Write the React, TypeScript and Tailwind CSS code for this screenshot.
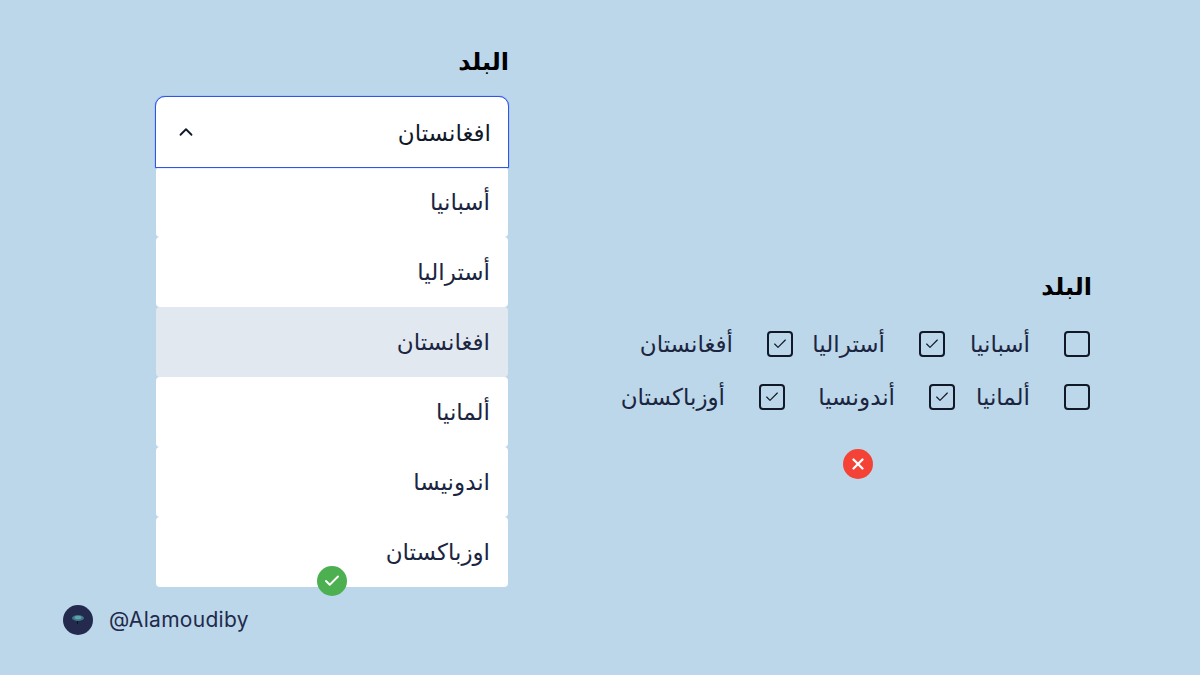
import React from 'react';
import { Check, ChevronUp, X } from 'lucide-react';

const font = "font-['DejaVu_Sans',sans-serif]";

const options = [
  { label: 'أسبانيا', active: false },
  { label: 'أستراليا', active: false },
  { label: 'افغانستان', active: true },
  { label: 'ألمانيا', active: false },
  { label: 'اندونيسا', active: false },
  { label: 'اوزباكستان', active: false },
];

const rows = [
  [
    { label: 'أسبانيا', checked: false, width: 'w-[62px]' },
    { label: 'أستراليا', checked: true, width: 'w-[69px]' },
    { label: 'أفغانستان', checked: true, width: 'w-auto' },
  ],
  [
    { label: 'ألمانيا', checked: false, width: 'w-[52px]' },
    { label: 'أندونسيا', checked: true, width: 'w-[87px]' },
    { label: 'أوزباكستان', checked: true, width: 'w-auto' },
  ],
];

const CheckItem = ({ label, checked, width }: { label: string; checked: boolean; width: string }) => (
  <div className="flex items-center gap-[34px]">
    <div className="w-[26px] h-[26px] rounded-[4px] border-2 border-[#111827] flex items-center justify-center">
      {checked && <Check size={16} strokeWidth={1.75} className="text-[#111827]" />}
    </div>
    <span className={`${width} whitespace-nowrap text-[23px] h-[26px] flex items-center text-[#1b2540]`}>{label}</span>
  </div>
);

export default function App() {
  return (
    <div className={`w-[1200px] h-[675px] overflow-hidden bg-[#bbd7e9] flex flex-col ${font}`}>
      <div className="flex h-[605px]">
        {/* Dropdown */}
        <div dir="rtl" className="ml-[155px] mt-[44px] w-[354px] flex flex-col">
          <h2 className="text-[24px] font-bold leading-[36px] text-black">البلد</h2>
          <div className="mt-[16px] relative">
            <div className="relative z-10 h-[72px] rounded-t-[10px] border border-[#2f55e8] shadow-[0_0_1px_#2f55e8] bg-white flex items-center justify-between pr-[17px] pl-[19px]">
              <span className="text-[23px] leading-[28px] pt-[2px] text-[#111827]">افغانستان</span>
              <ChevronUp size={22} strokeWidth={2} className="text-[#111827]" />
            </div>
            <div className="mx-px -mt-px flex flex-col">
              {options.map(o => (
                <div
                  key={o.label}
                  className={`h-[70px] rounded-[4px] flex items-center pr-[18px] text-[23px] text-[#1b2540] ${o.active ? 'bg-[#e2e8f0]' : 'bg-white'}`}
                >
                  {o.label}
                </div>
              ))}
            </div>
            <div className="absolute z-10 left-[162px] top-[470px] w-[30px] h-[30px] rounded-full bg-[#4caf50] flex items-center justify-center">
              <Check size={18} strokeWidth={2.5} className="text-white" />
            </div>
          </div>
        </div>

        {/* Checkbox group */}
        <div dir="rtl" className="ml-[110px] mt-[269px] w-[473px] flex flex-col">
          <h2 className="text-[24px] font-bold leading-[36px] text-black">البلد</h2>
          <div className="mt-[26px] flex flex-col gap-[27px] pr-[2px]">
            {rows.map((row, i) => (
              <div key={i} className="flex items-center gap-[23px]">
                {row.map(item => (
                  <CheckItem key={item.label} label={item.label} checked={item.checked} width={item.width} />
                ))}
              </div>
            ))}
          </div>
          <div className="mt-[39px] mr-[219px] w-[30px] h-[30px] rounded-full bg-[#f44336] flex items-center justify-center">
            <X size={18} strokeWidth={3} className="text-white" />
          </div>
        </div>
      </div>

      {/* Footer handle */}
      <div className="ml-[63px] flex items-center gap-[16px]">
        <div className="w-[30px] h-[30px] rounded-full bg-[#232a4d] flex items-center justify-center">
          <svg width="18" height="14" viewBox="0 0 18 14">
            <ellipse cx="9" cy="5" rx="6" ry="3" fill="#3f7486" />
            <ellipse cx="9" cy="4.5" rx="3.5" ry="1.8" fill="#5ba4aa" />
            <path d="M8.5 8v3" stroke="#0d1326" strokeWidth="1" />
          </svg>
        </div>
        <span className="font-['Inter',sans-serif] text-[21px] tracking-[0.3px] leading-[30px] text-[#232a4d]">@Alamoudiby</span>
      </div>
    </div>
  );
}
